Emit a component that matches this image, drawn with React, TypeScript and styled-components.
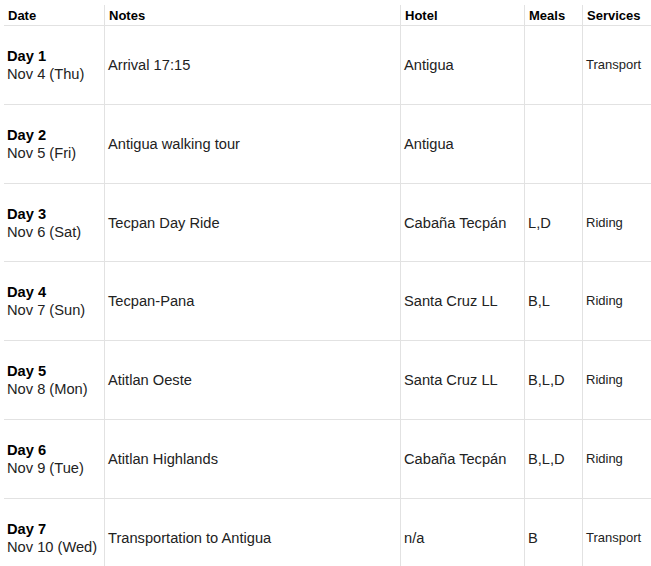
import React from "react";
import styled, { createGlobalStyle } from "styled-components";

const Global = createGlobalStyle`
  html, body { margin: 0; padding: 0; background: #fff; }
  body { font-family: "Liberation Sans", Arial, sans-serif; color: #222; }
`;

const Page = styled.div`
  width: 651px;
  height: 566px;
  overflow: hidden;
  padding: 5px 0 0 4px;
  box-sizing: border-box;
`;

const Grid = styled.div`
  display: grid;
  grid-template-columns: 101px 296px 124px 58px 120px;
  grid-auto-rows: 78.83px;
  grid-template-rows: 21px;
`;

const Cell = styled.div<{ $last?: boolean; $small?: boolean }>`
  box-sizing: border-box;
  border-bottom: 1px solid #e2e2e2;
  border-right: ${(p) => (p.$last ? "none" : "1px solid #e2e2e2")};
  display: flex;
  flex-direction: column;
  justify-content: center;
  padding: 0 3px 0 3px;
  font-size: ${(p) => (p.$small ? "13px" : "14.67px")};
  line-height: 18px;
  color: #222;
  white-space: nowrap;
  overflow: hidden;
`;

const HeadCell = styled(Cell)`
  font-size: 13px;
  font-weight: bold;
  color: #000;
  line-height: 15px;
  padding-left: 4px;
`;

const DayTitle = styled.span`
  font-weight: bold;
  color: #000;
`;

const DayDate = styled.span``;

type Row = {
  day: string;
  date: string;
  notes: string;
  hotel: string;
  meals: string;
  services: string;
};

const rows: Row[] = [
  { day: "Day 1", date: "Nov 4 (Thu)", notes: "Arrival 17:15", hotel: "Antigua", meals: "", services: "Transport" },
  { day: "Day 2", date: "Nov 5 (Fri)", notes: "Antigua walking tour", hotel: "Antigua", meals: "", services: "" },
  { day: "Day 3", date: "Nov 6 (Sat)", notes: "Tecpan Day Ride", hotel: "Cabaña Tecpán", meals: "L,D", services: "Riding" },
  { day: "Day 4", date: "Nov 7 (Sun)", notes: "Tecpan-Pana", hotel: "Santa Cruz LL", meals: "B,L", services: "Riding" },
  { day: "Day 5", date: "Nov 8 (Mon)", notes: "Atitlan Oeste", hotel: "Santa Cruz LL", meals: "B,L,D", services: "Riding" },
  { day: "Day 6", date: "Nov 9 (Tue)", notes: "Atitlan Highlands", hotel: "Cabaña Tecpán", meals: "B,L,D", services: "Riding" },
  { day: "Day 7", date: "Nov 10 (Wed)", notes: "Transportation to Antigua", hotel: "n/a", meals: "B", services: "Transport" },
];

export default function App() {
  return (
    <>
      <Global />
      <Page>
        <Grid>
          <HeadCell>Date</HeadCell>
          <HeadCell>Notes</HeadCell>
          <HeadCell>Hotel</HeadCell>
          <HeadCell>Meals</HeadCell>
          <HeadCell $last>Services</HeadCell>
          {rows.map((r) => (
            <React.Fragment key={r.day}>
              <Cell>
                <DayTitle>{r.day}</DayTitle>
                <DayDate>{r.date}</DayDate>
              </Cell>
              <Cell>{r.notes}</Cell>
              <Cell>{r.hotel}</Cell>
              <Cell>{r.meals}</Cell>
              <Cell $last $small>{r.services}</Cell>
            </React.Fragment>
          ))}
        </Grid>
      </Page>
    </>
  );
}
